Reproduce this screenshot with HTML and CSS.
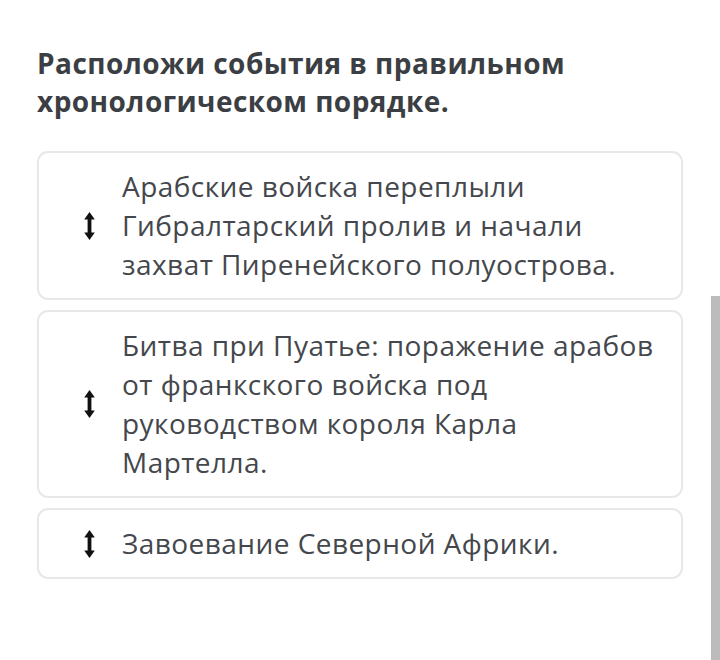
FILE: index.html
```html
<!DOCTYPE html>
<html lang="ru">
<head>
    <meta charset="UTF-8">
    <meta name="viewport" content="width=device-width, initial-scale=1.0">
    <title>Хронологический порядок</title>
    <link rel="stylesheet" href="styles.css">
</head>
<body>

    <div class="container">
        <h2 class="question">Расположи события в правильном хронологическом порядке.</h2>

        <div class="item">
            <span class="handle">
                <svg width="11" height="28" viewBox="0 0 11 28"><path d="M5.5 0 L10.8 7.5 L7.4 7.5 L7.4 20.5 L10.8 20.5 L5.5 28 L0.2 20.5 L3.6 20.5 L3.6 7.5 L0.2 7.5 Z" fill="#111"/></svg>
            </span>
            <div class="text">Арабские войска переплыли Гибралтарский пролив и начали захват Пиренейского полуострова.</div>
        </div>

        <div class="item">
            <span class="handle">
                <svg width="11" height="28" viewBox="0 0 11 28"><path d="M5.5 0 L10.8 7.5 L7.4 7.5 L7.4 20.5 L10.8 20.5 L5.5 28 L0.2 20.5 L3.6 20.5 L3.6 7.5 L0.2 7.5 Z" fill="#111"/></svg>
            </span>
            <div class="text">Битва при Пуатье: поражение арабов от франкского войска под руководством короля Карла Мартелла.</div>
        </div>

        <div class="item">
            <span class="handle">
                <svg width="11" height="28" viewBox="0 0 11 28"><path d="M5.5 0 L10.8 7.5 L7.4 7.5 L7.4 20.5 L10.8 20.5 L5.5 28 L0.2 20.5 L3.6 20.5 L3.6 7.5 L0.2 7.5 Z" fill="#111"/></svg>
            </span>
            <div class="text">Завоевание Северной Африки.</div>
        </div>
    </div>

    <div class="scrollbar"></div>

</body>
</html>
```

FILE: styles.css
```css
body {
    font-family: "Open Sans", "Noto Sans", sans-serif;
    margin: 0;
    background-color: #ffffff;
}
.container {
    width: 646px;
    padding: 44px 0 0 37px;
}
.question {
    margin: 0 0 31px 0;
    font-size: 28px;
    line-height: 38px;
    font-weight: 700;
    letter-spacing: 0.45px;
    color: #3b3e43;
}
.item {
    display: flex;
    align-items: center;
    margin-bottom: 10px;
    padding: 14px 24px 14px 0;
    border: 2px solid #e6e8ea;
    border-radius: 11px;
    background: white;
}
.handle {
    display: flex;
    width: 85px;
    justify-content: center;
    padding-left: 15px;
    box-sizing: border-box;
    flex-shrink: 0;
}
.text {
    margin-left: -2px;
    font-size: 28px;
    line-height: 39px;
    letter-spacing: 0.45px;
    color: #44474c;
}
.scrollbar {
    position: fixed;
    right: 0;
    top: 296px;
    bottom: 0;
    width: 9px;
    background: #bcbcbc;
}
```
